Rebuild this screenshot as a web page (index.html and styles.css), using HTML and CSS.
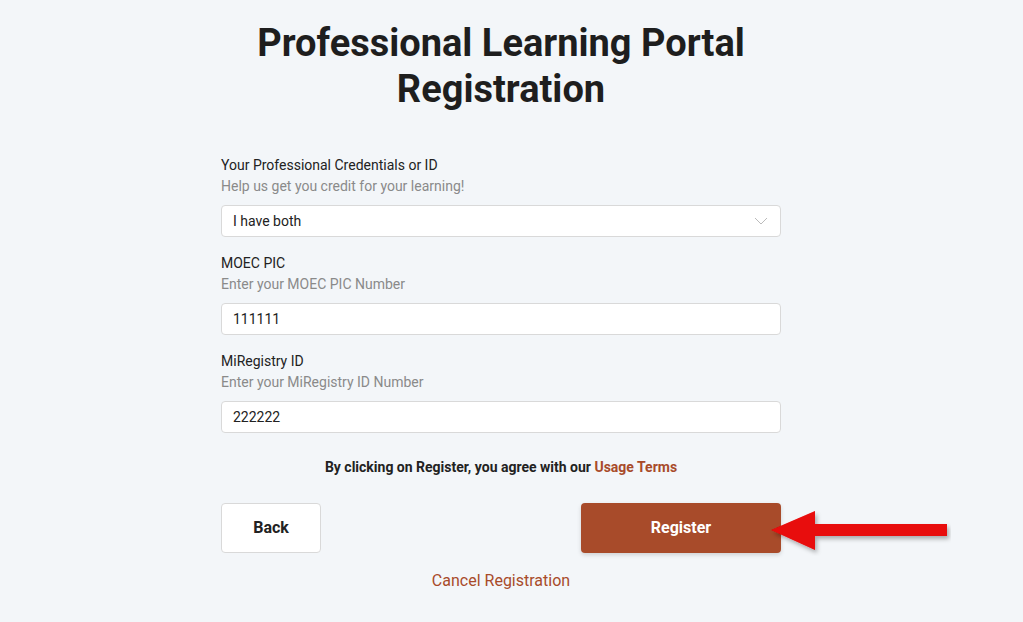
FILE: index.html
```html
<!DOCTYPE html>
<html lang="en">
<head>
    <meta charset="UTF-8">
    <meta name="viewport" content="width=device-width, initial-scale=1.0">
    <title>Professional Learning Portal Registration</title>
    <link rel="stylesheet" href="styles.css">
</head>
<body>
    <div class="page">
        <h1>Professional Learning Portal Registration</h1>

        <form class="reg-form">
            <div class="field">
                <label>Your Professional Credentials or ID</label>
                <p class="hint">Help us get you credit for your learning!</p>
                <div class="select-box">
                    <span>I have both</span>
                    <svg width="14" height="8" viewBox="0 0 14 8"><path d="M1 1l6 6 6-6" fill="none" stroke="#bbb" stroke-width="1"/></svg>
                </div>
            </div>

            <div class="field">
                <label>MOEC PIC</label>
                <p class="hint">Enter your MOEC PIC Number</p>
                <input class="text-input" type="text" value="111111">
            </div>

            <div class="field">
                <label>MiRegistry ID</label>
                <p class="hint">Enter your MiRegistry ID Number</p>
                <input class="text-input" type="text" value="222222">
            </div>

            <p class="agree">By clicking on Register, you agree with our <a href="#">Usage Terms</a></p>

            <div class="actions">
                <button type="button" class="btn btn-back">Back</button>
                <button type="button" class="btn btn-register">Register</button>
                <svg class="arrow" width="182" height="50" viewBox="0 0 182 50">
                    <defs>
                        <filter id="sh" x="-10%" y="-20%" width="130%" height="160%">
                            <feDropShadow dx="2" dy="3" stdDeviation="2" flood-color="#000" flood-opacity="0.3"/>
                        </filter>
                    </defs>
                    <polygon points="2,24 46,5 46,18 178,18 178,30 46,30 46,44" fill="#e80808" filter="url(#sh)"/>
                </svg>
            </div>

            <a class="cancel" href="#">Cancel Registration</a>
        </form>
    </div>
</body>
</html>
```

FILE: styles.css
```css
* {
    margin: 0;
    padding: 0;
    box-sizing: border-box;
}

body {
    font-family: Roboto, "Liberation Sans", sans-serif;
    background-color: #f3f6f9;
    color: #222;
}

.page {
    width: 1002px;
    padding-top: 20px;
}

h1 {
    font-size: 38px;
    line-height: 46px;
    font-weight: 700;
    text-align: center;
    color: #1e1e1e;
    width: 560px;
    margin: 0 auto;
}

.reg-form {
    width: 560px;
    margin: 43px auto 0;
    display: flex;
    flex-direction: column;
}

.field {
    display: flex;
    flex-direction: column;
    margin-bottom: 16px;
}

.field label {
    font-size: 14px;
    line-height: 21px;
    color: #222;
}

.hint {
    font-size: 14px;
    line-height: 21px;
    color: #8a8a8a;
    margin-bottom: 8px;
}

.select-box,
.text-input {
    height: 32px;
    background: #fff;
    border: 1px solid #d9d9d9;
    border-radius: 4px;
    font-family: inherit;
    font-size: 14px;
    color: #222;
    padding: 0 11px;
}

.select-box {
    display: flex;
    align-items: center;
    justify-content: space-between;
}

.select-box svg {
    margin-right: 1px;
}

.text-input {
    width: 100%;
    outline: none;
}

.agree {
    text-align: center;
    font-size: 14px;
    line-height: 20px;
    font-weight: 700;
    color: #222;
    margin-top: 8px;
}

.agree a {
    color: #a84b2a;
    text-decoration: none;
}

.actions {
    position: relative;
    display: flex;
    justify-content: space-between;
    margin-top: 26px;
}

.btn {
    height: 50px;
    border-radius: 4px;
    font-family: inherit;
    font-size: 16px;
    font-weight: 700;
    cursor: pointer;
    padding-bottom: 1px;
}

.btn-back {
    width: 100px;
    background: #fff;
    border: 1px solid #d9d9d9;
    color: #222;
}

.btn-register {
    width: 200px;
    background: #a84b2a;
    border: none;
    color: #fff;
    box-shadow: 0 2px 4px rgba(0, 0, 0, 0.15);
}

.arrow {
    position: absolute;
    left: 548px;
    top: 3px;
}

.cancel {
    align-self: center;
    margin-top: 18px;
    font-size: 16px;
    line-height: 20px;
    color: #a84b2a;
    text-decoration: none;
}
```
